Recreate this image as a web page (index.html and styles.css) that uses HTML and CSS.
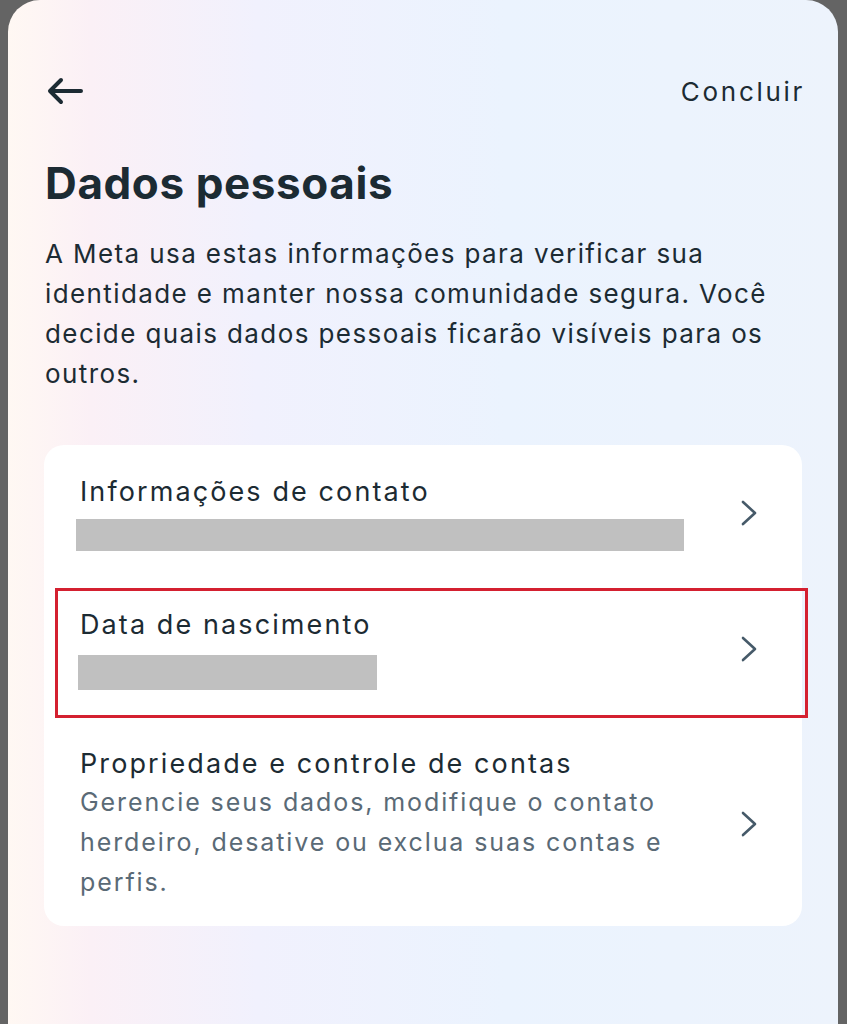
FILE: index.html
```html
<!DOCTYPE html>
<html>
	<head>
		<meta charset="utf-8">
		<link rel="stylesheet" href="styles.css">
	</head>
	<body>
		<div class="screen">
			<div class="topbar">
				<svg class="back" width="38" height="28" viewBox="0 0 38 28">
					<path d="M35 14 H5 M15 3 L4 14 L15 25" fill="none" stroke="#1c2b33" stroke-width="4" stroke-linecap="round" stroke-linejoin="round"/>
				</svg>
				<div class="done">Concluir</div>
			</div>
			<h1 class="title">Dados pessoais</h1>
			<p class="intro">A Meta usa estas informações para verificar sua identidade e manter nossa comunidade segura. Você decide quais dados pessoais ficarão visíveis para os outros.</p>
			<div class="card">
				<div class="row">
					<div class="row-text">
						<div class="row-name">Informações de contato</div>
						<div class="redacted redacted-long"></div>
					</div>
					<svg class="chevron" width="18" height="28" viewBox="0 0 18 28"><path d="M3 3 L15 14 L3 25" fill="none" stroke="#465a69" stroke-width="2.6" stroke-linecap="round" stroke-linejoin="round"/></svg>
				</div>
				<div class="row">
					<div class="row-text">
						<div class="row-name">Data de nascimento</div>
						<div class="redacted redacted-short"></div>
					</div>
					<svg class="chevron" width="18" height="28" viewBox="0 0 18 28"><path d="M3 3 L15 14 L3 25" fill="none" stroke="#465a69" stroke-width="2.6" stroke-linecap="round" stroke-linejoin="round"/></svg>
					<div class="marker"></div>
				</div>
				<div class="row row-last">
					<div class="row-text">
						<div class="row-name">Propriedade e controle de contas</div>
						<div class="row-desc">Gerencie seus dados, modifique o contato herdeiro, desative ou exclua suas contas e perfis.</div>
					</div>
					<svg class="chevron" width="18" height="28" viewBox="0 0 18 28"><path d="M3 3 L15 14 L3 25" fill="none" stroke="#465a69" stroke-width="2.6" stroke-linecap="round" stroke-linejoin="round"/></svg>
				</div>
			</div>
		</div>
	</body>
</html>
```
FILE: styles.css
```css
html, body
{
	margin: 0;
	height: 100%;
}
body
{
	background-color: #646464;
	font-family: "Inter", "Noto Sans", sans-serif;
	color: #1c2b33;
}
.screen
{
	margin: 0 9px 0 8px;
	height: 1024px;
	box-sizing: border-box;
	padding: 0 36px;
	border-radius: 32px 32px 0 0;
	background: linear-gradient(90deg, #fff8f3 0%, #fbf0f6 10%, #f1f1fd 30%, #ebf3fe 60%, #edf3fc 100%);
}
.topbar
{
	display: flex;
	align-items: center;
	justify-content: space-between;
	padding-top: 77px;
	height: 28px;
}
.back
{
	margin-left: 2px;
}
.done
{
	font-size: 26px;
	letter-spacing: 2.7px;
	margin-right: -3px;
}
.title
{
	margin: 52px 0 0 1px;
	font-size: 44px;
	font-weight: 700;
	line-height: 52px;
	letter-spacing: 0.6px;
}
.intro
{
	margin: 25px 0 0 1px;
	font-size: 26px;
	line-height: 40px;
	letter-spacing: 1.4px;
	color: #1c2b33;
}
.card
{
	margin-top: 51px;
	background-color: #ffffff;
	border-radius: 20px;
	padding: 1px 0 0;
}
.row
{
	position: relative;
	display: flex;
	align-items: center;
	padding: 28px 44px 28px 36px;
}
.row-last
{
	padding-bottom: 24px;
}
.row-text
{
	flex: 1;
	padding-right: 40px;
}
.row-name
{
	font-size: 27px;
	line-height: 36px;
	letter-spacing: 2.1px;
}
.row-desc
{
	font-size: 25px;
	line-height: 40px;
	letter-spacing: 1.9px;
	color: #5a6a76;
}
.redacted
{
	height: 32px;
	background-color: #c0c0c0;
	margin-top: 9px;
}
.redacted-long
{
	width: 608px;
	margin-left: -4px;
}
.redacted-short
{
	width: 299px;
	margin-left: -2px;
	margin-top: 12px;
	height: 35px;
}
.marker
{
	position: absolute;
	left: 11px;
	right: -6px;
	top: 9px;
	bottom: 0;
	border: 3px solid #d42030;
}
```
